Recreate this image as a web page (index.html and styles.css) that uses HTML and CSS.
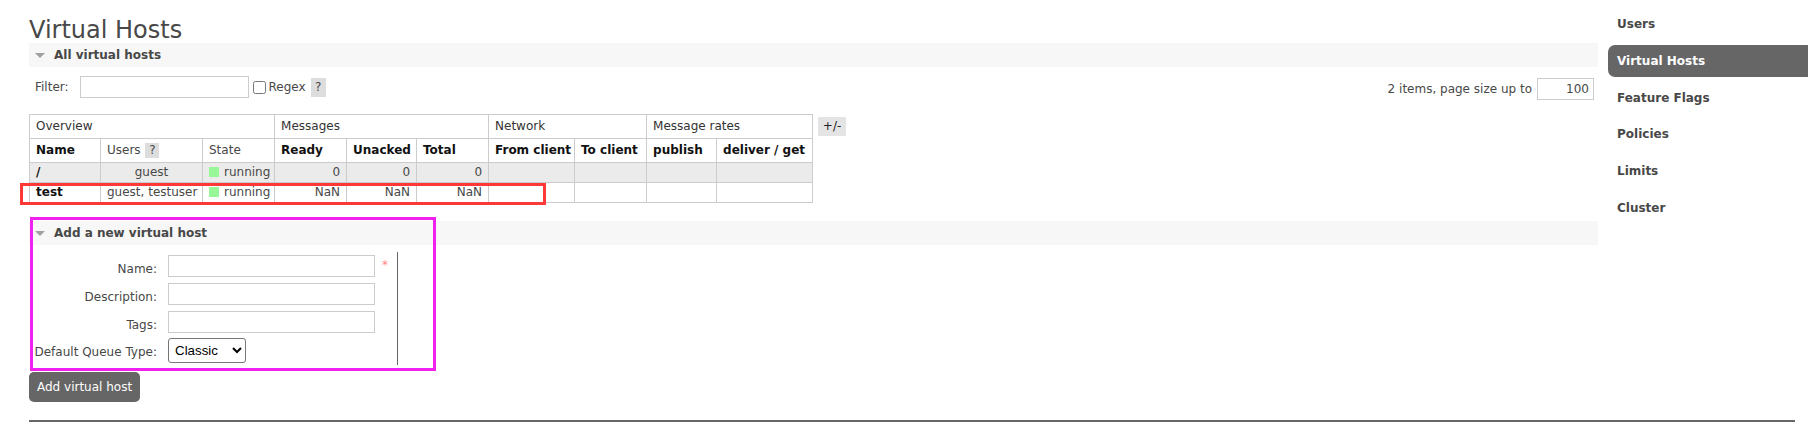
FILE: index.html
```html
<!DOCTYPE html>
<html>
<head>
<meta charset="utf-8">
<title>Virtual Hosts</title>
<link rel="stylesheet" href="styles.css">
</head>
<body>
<div class="page">
  <div class="layout">
    <main class="main">
      <h1 class="title">Virtual Hosts</h1>

      <section class="section">
        <h2 class="section-head"><span class="arrow"></span>All virtual hosts</h2>
        <div class="filter-row">
          <div class="filter-left">
            <label class="filter-label">Filter:</label>
            <input class="text-input filter-input" type="text">
            <input class="check" type="checkbox">
            <span class="regex">Regex</span>
            <span class="help help-lg">?</span>
          </div>
          <div class="filter-right">
            <span>2 items, page size up to</span>
            <input class="text-input page-size" type="text" value="100">
          </div>
        </div>

        <div class="table-row">
          <table class="list">
            <colgroup>
              <col class="w71"><col class="w102"><col class="w72"><col class="w72"><col class="w70">
              <col class="w72"><col class="w86"><col class="w72"><col class="w70"><col class="w96">
            </colgroup>
            <thead>
              <tr class="group">
                <th colspan="3">Overview</th>
                <th colspan="3">Messages</th>
                <th colspan="2">Network</th>
                <th colspan="2">Message rates</th>
              </tr>
              <tr class="cols">
                <th class="b">Name</th>
                <th>Users <span class="help help-sm">?</span></th>
                <th>State</th>
                <th class="b">Ready</th>
                <th class="b">Unacked</th>
                <th class="b">Total</th>
                <th class="b">From client</th>
                <th class="b">To client</th>
                <th class="b">publish</th>
                <th class="b">deliver / get</th>
              </tr>
            </thead>
            <tbody>
              <tr class="alt">
                <td class="name">/</td>
                <td class="c">guest</td>
                <td><span class="dot"></span>running</td>
                <td class="r">0</td>
                <td class="r">0</td>
                <td class="r">0</td>
                <td></td><td></td><td></td><td></td>
              </tr>
              <tr class="plain">
                <td class="name">test</td>
                <td class="c">guest, testuser</td>
                <td><span class="dot"></span>running</td>
                <td class="r">NaN</td>
                <td class="r">NaN</td>
                <td class="r">NaN</td>
                <td></td><td></td><td></td><td></td>
              </tr>
            </tbody>
          </table>
          <span class="toggle">+/-</span>
        </div>
      </section>

      <section class="section section-add">
        <h2 class="section-head"><span class="arrow"></span>Add a new virtual host</h2>
        <div class="form-wrap">
          <div class="form-grid">
            <label class="f-label">Name:</label>
            <input class="text-input f-input" type="text">
            <span class="req">*</span>

            <label class="f-label">Description:</label>
            <input class="text-input f-input" type="text">
            <span></span>

            <label class="f-label">Tags:</label>
            <input class="text-input f-input" type="text">
            <span></span>

            <label class="f-label f-label-sel">Default Queue Type:</label>
            <select class="f-select">
              <option>Classic</option>
              <option>Quorum</option>
              <option>Stream</option>
            </select>
            <span></span>
          </div>
        </div>
        <button class="btn" type="button">Add virtual host</button>
      </section>
    </main>

    <nav class="nav">
      <a class="nav-item">Users</a>
      <a class="nav-item active">Virtual Hosts</a>
      <a class="nav-item">Feature Flags</a>
      <a class="nav-item">Policies</a>
      <a class="nav-item">Limits</a>
      <a class="nav-item">Cluster</a>
    </nav>
  </div>
  <div class="footer"></div>

  <div class="mark mark-red"></div>
  <div class="mark mark-magenta"></div>
</div>
</body>
</html>
```

FILE: styles.css
```css
* { box-sizing: border-box; }

html, body {
  margin: 0;
  padding: 0;
  background: #fff;
}

body {
  font-family: "DejaVu Sans", Verdana, sans-serif;
  font-size: 12px;
  color: #484848;
}

.page {
  position: relative;
  height: 423px;
  overflow: hidden;
  padding: 0 10px 0 29px;
}

.layout {
  display: flex;
  gap: 10px;
}

.main {
  flex: 1;
  min-width: 0;
  padding-top: 18px;
}

.title {
  margin: 0 0 1px;
  font-size: 24px;
  font-weight: normal;
  line-height: 24px;
  color: #484848;
}

.section-head {
  display: flex;
  align-items: center;
  margin: 0;
  height: 24px;
  padding-left: 6px;
  background: #f7f7f7;
  font-size: 12px;
  font-weight: bold;
  line-height: 24px;
  color: #484848;
}

.arrow {
  width: 0;
  height: 0;
  margin-right: 9px;
  border-left: 5px solid transparent;
  border-right: 5px solid transparent;
  border-top: 5px solid #a0a0a0;
}

.filter-row {
  display: flex;
  justify-content: space-between;
  align-items: flex-start;
  margin-top: 9px;
  padding: 0 4px 0 6px;
}

.filter-left {
  display: flex;
  align-items: center;
  height: 22px;
}

.filter-label { margin-right: 11px; }

.text-input {
  height: 22px;
  border: 1px solid #ccc;
  border-radius: 0;
  padding: 0 4px;
  font-family: "DejaVu Sans", Verdana, sans-serif;
  font-size: 12px;
  color: #484848;
  background: #fff;
  outline: none;
}

.filter-input { width: 169px; }

.check {
  width: 13px;
  height: 13px;
  margin: 0 3px 0 4px;
}

.regex { margin-right: 5px; }

.help {
  display: inline-block;
  background: #ddd;
  color: #484848;
  text-align: center;
}

.help-lg {
  width: 15px;
  height: 19px;
  line-height: 19px;
}

.help-sm {
  width: 14px;
  height: 15px;
  line-height: 15px;
  margin-left: 1px;
  vertical-align: 0;
}

.filter-right {
  display: flex;
  align-items: center;
  margin-top: 2px;
}

.page-size {
  width: 57px;
  margin-left: 5px;
  text-align: right;
}

.table-row {
  display: flex;
  align-items: flex-start;
  margin-top: 14px;
}

.list {
  border-collapse: collapse;
  table-layout: fixed;
  width: 784px;
}

.w71 { width: 71px; }
.w102 { width: 102px; }
.w72 { width: 72px; }
.w70 { width: 70px; }
.w86 { width: 86px; }
.w96 { width: 96px; }

.list th,
.list td {
  border: 1px solid #ccc;
  padding: 0 6px;
  white-space: nowrap;
  overflow: hidden;
  text-align: left;
}

.list th {
  height: 23px;
  line-height: 23px;
  font-weight: normal;
  background: #fff;
}

.list .group th { color: #333; }
.list .cols th { color: #484848; }
.list .cols th.b { font-weight: bold; color: #111; }

.list td {
  height: 19px;
  line-height: 19px;
}

.list tr.alt td { background: #ebebeb; }
.list tr.plain td { background: #fff; }

.list td.name { font-weight: bold; color: #111; }
.list td.c { text-align: center; }
.list td.r { text-align: right; }

.dot {
  display: inline-block;
  width: 10px;
  height: 10px;
  margin-right: 5px;
  background: #98f898;
  vertical-align: -1px;
}

.toggle {
  display: inline-block;
  margin: 3px 0 0 5px;
  width: 28px;
  height: 19px;
  line-height: 19px;
  text-align: center;
  background: #e4e4e4;
  color: #222;
}

.section-add { margin-top: 18px; }

.form-wrap {
  display: flex;
  margin-top: 7px;
}

.form-grid {
  display: grid;
  grid-template-columns: 134px 207px 22px;
  column-gap: 0;
  row-gap: 6px;
  padding: 3px 0 2px 5px;
  border-right: 1px solid #666;
}

.f-label {
  padding: 7px 11px 0 0;
  line-height: 14px;
  text-align: right;
  white-space: nowrap;
}

.f-label-sel { margin-top: -1px; }

.f-input { width: 207px; }

.req {
  padding: 3px 0 0 7px;
  line-height: 14px;
  color: #f88;
}

.f-select {
  width: 78px;
  height: 25px;
  margin-top: -1px;
  font-family: "Liberation Sans", Arial, sans-serif;
  font-size: 13.333px;
  color: #000;
  border: 1px solid #767676;
  border-radius: 3px;
  background: #fff;
  padding: 0 2px;
}

.btn {
  display: inline-block;
  margin-top: 7px;
  height: 30px;
  padding: 0 8px;
  border: 0;
  border-radius: 5px;
  background: #666;
  color: #fff;
  font-family: "DejaVu Sans", Verdana, sans-serif;
  font-size: 12px;
  line-height: 30px;
}

.nav {
  width: 200px;
  flex: none;
  padding-top: 8px;
}

.nav-item {
  display: block;
  height: 32px;
  line-height: 32px;
  padding-left: 9px;
  margin-bottom: 4.8px;
  font-weight: bold;
  color: #484848;
  text-decoration: none;
}

.nav-item.active {
  background: #666;
  color: #fff;
  border-radius: 7px 0 0 7px;
}

.footer {
  margin-top: 18px;
  margin-right: 13px;
  border-top: 2px solid #666;
}

.mark {
  position: absolute;
  pointer-events: none;
}

.mark-red {
  left: 20px;
  top: 183px;
  width: 526px;
  height: 22px;
  border: 3px solid #ff3838;
}

.mark-magenta {
  left: 30px;
  top: 217px;
  width: 406px;
  height: 154px;
  border: 3px solid #f020f0;
}
```
